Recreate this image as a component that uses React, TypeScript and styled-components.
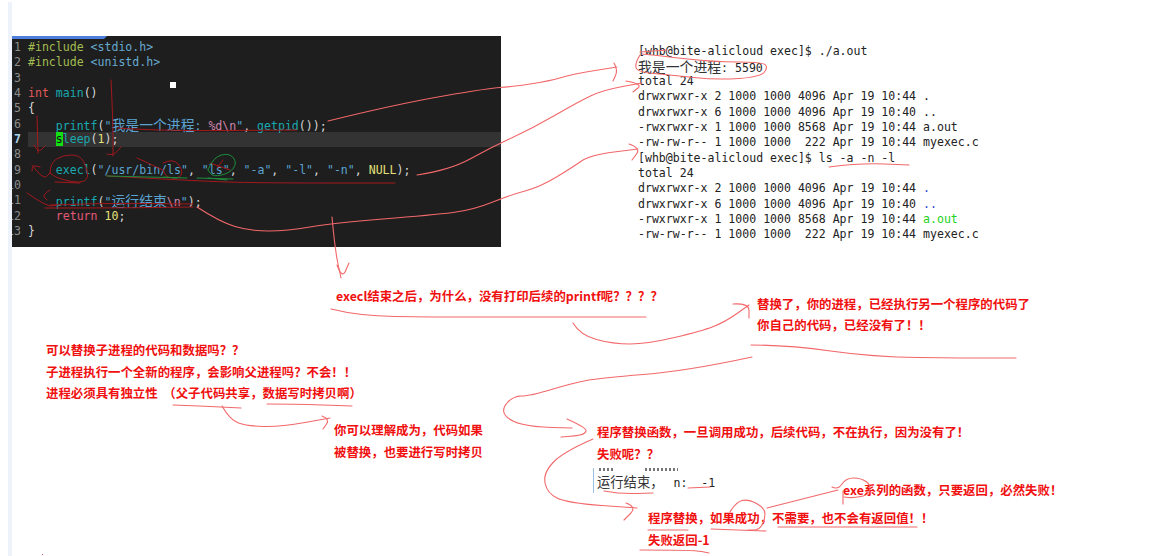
import styled, { createGlobalStyle } from "styled-components";

const CJK = '"Noto Sans CJK SC"';
const MONO = `"DejaVu Sans Mono", ${CJK}, monospace`;

const GlobalStyle = createGlobalStyle`
  html, body {
    margin: 0;
    background: #fff;
    overflow: hidden;
  }
`;

const Board = styled.div`
  position: relative;
  width: 1172px;
  height: 556px;
  background: #fff;
  overflow: hidden;
`;

const TopRow = styled.div`
  display: flex;
  align-items: flex-start;
  padding: 36px 0 0 12px;
`;

const SideStrip = styled.div`
  position: absolute;
  left: 8px;
  top: 2px;
  bottom: 0;
  width: 4px;
  background: #eef3fb;
`;

const StrayDot = styled.div`
  position: absolute;
  left: 42px;
  top: 554px;
  width: 1px;
  height: 1px;
  background: #f2686a;
`;

const CodePanel = styled.div`
  position: relative;
  width: 489px;
  height: 211px;
  box-sizing: border-box;
  padding-top: 4px;
  background: #1e1e1e;
  overflow: hidden;
  font: 11.55px/15.33px ${MONO};
`;

const TabEdge = styled.div`
  position: absolute;
  left: 0;
  top: 0;
  width: 95px;
  height: 3px;
  background: #4f7fdc;
  clip-path: polygon(0 0, 100% 0, 92px 100%, 0 100%);
`;

const CursorDot = styled.div`
  position: absolute;
  left: 158px;
  top: 46px;
  width: 6px;
  height: 6px;
  background: #fff;
`;

const CodeRow = styled.div<{ $active?: boolean }>`
  display: grid;
  grid-template-columns: 9px 1fr;
  column-gap: 7px;
  height: 15.33px;
  white-space: pre;
  color: #d6d6d6;
  background: ${(p) =>
    p.$active
      ? "linear-gradient(90deg, #1e1e1e 16px, #333 16px)"
      : "transparent"};
`;

const LineNo = styled.span<{ $active?: boolean }>`
  display: flex;
  justify-content: flex-end;
  color: ${(p) => (p.$active ? "#a9d5ee" : "#8c8c8c")};
  font-weight: ${(p) => (p.$active ? 700 : 400)};
`;

const TOKEN_COLORS: Record<string, string> = {
  pre: "#a3bd52",
  inc: "#66a9cf",
  kw: "#e2575c",
  fn: "#18a9b0",
  str: "#5ba4d2",
  fmt: "#cf84ad",
  num: "#e6e07a",
  ret: "#e4587a",
  txt: "#d6d6d6",
};

const Token = styled.span<{ $kind: string }>`
  color: ${(p) => TOKEN_COLORS[p.$kind]};
`;

const CjkToken = styled(Token)`
  font-size: 13.85px;
  font-family: ${CJK}, sans-serif;
`;

const CursorChar = styled.span`
  background: #12e012;
  color: #111;
`;

const Terminal = styled.div`
  margin: 7.5px 0 0 137px;
  font: 11.55px/15.33px ${MONO};
  color: #222;
  white-space: pre;
`;

const TermLine = styled.div`
  height: 15.33px;
`;

const TermCjk = styled.span`
  font-size: 13.85px;
  font-family: ${CJK}, sans-serif;
  color: #333;
`;

const TermEntry = styled.span<{ $tone: "dir" | "exe" }>`
  color: ${(p) => (p.$tone === "dir" ? "#2b3fd6" : "#22d322")};
`;

const Note = styled.div<{ $x: number; $y: number; $lh?: number }>`
  position: absolute;
  left: ${(p) => p.$x}px;
  top: ${(p) => p.$y}px;
  font: 700 12.42px/${(p) => p.$lh ?? 21.6}px ${CJK}, sans-serif;
  color: #f01010;
  white-space: pre;
`;

const Snippet = styled.div`
  position: absolute;
  left: 593px;
  top: 468px;
  height: 25px;
  padding-left: 3px;
  border-left: 1px solid #9cc3e6;
  background: #fff;
  white-space: pre;
`;

const SnippetCut = styled.div`
  display: flex;
  height: 3px;
`;

const CutScrap = styled.div<{ $w: number; $gap?: number }>`
  width: ${(p) => p.$w}px;
  margin-left: ${(p) => p.$gap ?? 0}px;
  background: repeating-linear-gradient(90deg, #777 0 2px, transparent 2px 4px);
`;

const SnippetText = styled.div`
  font: 13.3px/22px ${CJK}, sans-serif;
  color: #333;
`;

const SnippetMono = styled.span`
  margin-left: 3px;
  font: 11.55px/22px ${MONO};
  color: #222;
`;

const InkLayer = styled.svg`
  position: absolute;
  left: 0;
  top: 0;
  pointer-events: none;
  fill: none;
  stroke-linecap: round;
  stroke-linejoin: round;
`;

const InkStroke = styled.path<{ $ink: "pink" | "dark" | "green" }>`
  stroke: ${(p) =>
    p.$ink === "pink" ? "#f2686a" : p.$ink === "dark" ? "#a3181d" : "#1c8f3c"};
  stroke-width: ${(p) => (p.$ink === "pink" ? 1.1 : 1)};
`;

type Tok = [string, string];

const CODE: Tok[][] = [
  [["pre", "#include"], ["txt", " "], ["inc", "<stdio.h>"]],
  [["pre", "#include"], ["txt", " "], ["inc", "<unistd.h>"]],
  [],
  [["kw", "int"], ["txt", " "], ["fn", "main"], ["txt", "()"]],
  [["txt", "{"]],
  [
    ["txt", "    "], ["fn", "printf"], ["txt", "("], ["str", '"'],
    ["cjk", "我是一个进程"], ["str", ": "], ["fmt", "%d\\n"], ["str", '"'],
    ["txt", ", "], ["fn", "getpid"], ["txt", "());"],
  ],
  [["txt", "    "], ["cursor", "s"], ["fn", "leep"], ["txt", "("], ["num", "1"], ["txt", ");"]],
  [],
  [
    ["txt", "    "], ["fn", "execl"], ["txt", "("], ["str", '"/usr/bin/ls"'], ["txt", ", "],
    ["str", '"ls"'], ["txt", ", "], ["str", '"-a"'], ["txt", ", "], ["str", '"-l"'],
    ["txt", ", "], ["str", '"-n"'], ["txt", ", "], ["num", "NULL"], ["txt", ");"],
  ],
  [],
  [
    ["txt", "    "], ["fn", "printf"], ["txt", "("], ["str", '"'], ["cjk", "运行结束"],
    ["fmt", "\\n"], ["str", '"'], ["txt", ");"],
  ],
  [["txt", "    "], ["ret", "return"], ["txt", " "], ["num", "10"], ["txt", ";"]],
  [["txt", "}"]],
];

const LISTING = [
  "drwxrwxr-x 2 1000 1000 4096 Apr 19 10:44 ",
  "drwxrwxr-x 6 1000 1000 4096 Apr 19 10:40 ",
  "-rwxrwxr-x 1 1000 1000 8568 Apr 19 10:44 ",
  "-rw-rw-r-- 1 1000 1000  222 Apr 19 10:44 ",
];

// smooth pen stroke through the points
const pen = (pts: number[][]) => {
  let d = `M${pts[0][0]} ${pts[0][1]}`;
  for (let i = 1; i < pts.length - 1; i++) {
    const mx = (pts[i][0] + pts[i + 1][0]) / 2;
    const my = (pts[i][1] + pts[i + 1][1]) / 2;
    d += ` Q${pts[i][0]} ${pts[i][1]} ${mx} ${my}`;
  }
  const last = pts[pts.length - 1];
  return `${d} L${last[0]} ${last[1]}`;
};

const PINK: number[][][] = [
  // printf -> pid output
  [[328, 121], [397, 104], [490, 88], [510, 87], [550, 81], [573, 74], [617, 67]],
  [[614, 63], [618, 70], [613, 81]],
  // execl -> total
  [[417, 175], [450, 170], [490, 148], [533, 128], [578, 102], [603, 90], [642, 83]],
  [[626, 81], [643, 84], [633, 92]],
  // printf -> second prompt
  [[197, 207], [220, 222], [250, 231], [287, 231], [333, 223], [433, 215], [473, 210], [510, 195], [540, 187], [573, 167], [590, 155], [638, 149]],
  [[629, 144], [641, 148], [632, 160]],
  // terminal marks
  [[640, 52], [667, 50]],
  [[640, 55], [635, 63], [637, 72], [670, 75], [717, 80], [760, 77], [768, 68], [763, 62], [713, 62], [653, 55], [642, 54]],
  [[829, 167], [860, 163], [909, 165]],
  // down to the question
  [[332, 217], [335, 250], [341, 278]],
  [[337, 265], [342, 279], [349, 263]],
  [[331, 309], [359, 316], [431, 317], [518, 317], [646, 317]],
  // question -> answer
  [[573, 323], [580, 335], [613, 344], [647, 344], [702, 331], [725, 322], [749, 305]],
  [[733, 304], [749, 303], [749, 318]],
  [[751, 345], [788, 345], [873, 357], [965, 358], [1016, 358]],
  // long loop into the replace note
  [[752, 357], [687, 371], [600, 378], [573, 383], [530, 396], [513, 396], [501, 410], [510, 421], [533, 427], [572, 428]],
  [[567, 419], [587, 428], [585, 434], [575, 436], [561, 437]],
  [[593, 439], [563, 452], [543, 473], [547, 493], [567, 503], [637, 508]],
  [[626, 503], [637, 507], [624, 520]],
  // snippet
  [[604, 491], [620, 494], [653, 493]],
  [[688, 488], [710, 487]],
  // 成功 circle and exe
  [[730, 512], [736, 502], [748, 499], [765, 508], [765, 520], [759, 530], [748, 530]],
  [[767, 508], [838, 490]],
  [[832, 487], [838, 490], [846, 478], [861, 478], [871, 485], [869, 495], [853, 498], [844, 497]],
  [[843, 491], [843, 504]],
  [[648, 530], [667, 530], [688, 530]],
  [[711, 529], [766, 531]],
  [[778, 527], [817, 527], [917, 527]],
  [[640, 550], [694, 550], [709, 553]],
  // left notes
  [[173, 405], [200, 406], [241, 408]],
  [[267, 404], [293, 404], [352, 406]],
  [[222, 406], [230, 420], [247, 426], [280, 427], [330, 418]],
  [[322, 416], [330, 419], [323, 429]],
];

const DARK: number[][][] = [
  [[111, 80], [113, 120], [113, 156]],
  [[107, 154], [113, 156], [121, 147]],
  [[37, 116], [38, 153]],
  [[34, 145], [38, 153], [45, 146]],
  [[50, 173], [50, 163], [63, 155], [80, 155], [87, 168], [88, 180], [77, 183], [57, 178], [50, 173]],
  [[32, 165], [43, 180], [50, 173]],
  [[32, 171], [32, 165], [40, 167]],
  [[50, 190], [42, 195], [47, 200]],
  [[27, 193], [47, 207], [57, 205]],
  [[118, 128], [157, 131], [297, 130]],
  [[55, 182], [80, 183]],
  [[107, 176], [197, 181], [257, 183], [395, 183]],
  [[163, 163], [173, 158], [183, 170], [180, 178], [167, 178], [163, 170]],
  [[137, 158], [163, 170]],
  [[210, 163], [230, 170]],
  [[217, 168], [223, 160]],
  [[50, 205], [100, 203], [193, 204]],
  [[45, 208], [117, 208], [193, 207]],
];

const GREEN: number[][][] = [
  [[208, 170], [213, 157], [230, 153], [237, 163], [230, 173], [213, 177], [208, 170]],
  [[107, 176], [187, 178]],
  [[197, 178], [233, 179]],
  [[164, 177], [177, 178]],
  [[208, 178], [227, 180]],
];

export default function App() {
  return (
    <Board>
      <GlobalStyle />
      <SideStrip />
      <StrayDot />
      <TopRow>
        <CodePanel>
          <TabEdge />
          <CursorDot />
          {CODE.map((line, i) => (
            <CodeRow key={i} $active={i === 6}>
              <LineNo $active={i === 6}>{i + 1}</LineNo>
              <span>
                {line.map(([kind, text], j) =>
                  kind === "cursor" ? (
                    <CursorChar key={j}>{text}</CursorChar>
                  ) : kind === "cjk" ? (
                    <CjkToken key={j} $kind="str">{text}</CjkToken>
                  ) : (
                    <Token key={j} $kind={kind}>{text}</Token>
                  )
                )}
              </span>
            </CodeRow>
          ))}
        </CodePanel>
        <Terminal>
          <TermLine>[whb@bite-alicloud exec]$ ./a.out</TermLine>
          <TermLine><TermCjk>我是一个进程</TermCjk>: 5590</TermLine>
          <TermLine>total 24</TermLine>
          <TermLine>{LISTING[0]}.</TermLine>
          <TermLine>{LISTING[1]}..</TermLine>
          <TermLine>{LISTING[2]}a.out</TermLine>
          <TermLine>{LISTING[3]}myexec.c</TermLine>
          <TermLine>[whb@bite-alicloud exec]$ ls -a -n -l</TermLine>
          <TermLine>total 24</TermLine>
          <TermLine>{LISTING[0]}<TermEntry $tone="dir">.</TermEntry></TermLine>
          <TermLine>{LISTING[1]}<TermEntry $tone="dir">..</TermEntry></TermLine>
          <TermLine>{LISTING[2]}<TermEntry $tone="exe">a.out</TermEntry></TermLine>
          <TermLine>{LISTING[3]}myexec.c</TermLine>
        </Terminal>
      </TopRow>

      <Note $x={336} $y={286}>execl结束之后，为什么，没有打印后续的printf呢？？？？</Note>
      <Note $x={757} $y={294} $lh={21}>
        {"替换了，你的进程，已经执行另一个程序的代码了\n你自己的代码，已经没有了！！"}
      </Note>
      <Note $x={46} $y={340}>
        {"可以替换子进程的代码和数据吗？？\n子进程执行一个全新的程序，会影响父进程吗？不会！！\n进程必须具有独立性  （父子代码共享，数据写时拷贝啊）"}
      </Note>
      <Note $x={334} $y={420}>{"你可以理解成为，代码如果\n被替换，也要进行写时拷贝"}</Note>
      <Note $x={597} $y={422}>
        {"程序替换函数，一旦调用成功，后续代码，不在执行，因为没有了！\n失败呢？？"}
      </Note>
      <Snippet>
        <SnippetCut>
          <CutScrap $w={14} $gap={2} />
          <CutScrap $w={33} $gap={32} />
        </SnippetCut>
        <SnippetText>
          运行结束，<SnippetMono> n:  -1</SnippetMono>
        </SnippetText>
      </Snippet>
      <Note $x={843} $y={480}>exe系列的函数，只要返回，必然失败！</Note>
      <Note $x={648} $y={508}>{"程序替换，如果成功，不需要，也不会有返回值！！\n失败返回-1"}</Note>

      <InkLayer width={1172} height={556}>
        {PINK.map((pts, i) => (
          <InkStroke key={i} $ink="pink" d={pen(pts)} />
        ))}
        {DARK.map((pts, i) => (
          <InkStroke key={i} $ink="dark" d={pen(pts)} />
        ))}
        {GREEN.map((pts, i) => (
          <InkStroke key={i} $ink="green" d={pen(pts)} />
        ))}
      </InkLayer>
    </Board>
  );
}
